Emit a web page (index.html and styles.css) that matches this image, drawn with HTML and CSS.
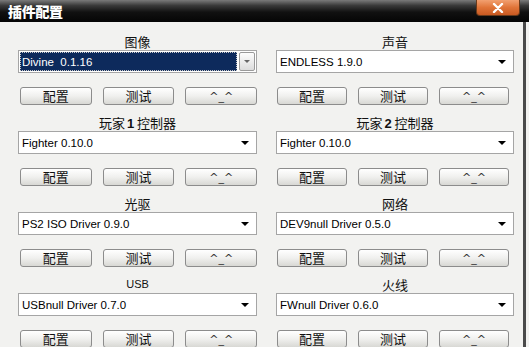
FILE: index.html
```html
<!DOCTYPE html>
<html>
<head>
<meta charset="utf-8">
<link rel="stylesheet" href="styles.css">
</head>
<body>
<div class="window">
  <div class="titlebar">
    <span class="title">插件配置</span>
    <span class="close">
      <svg width="14" height="10" viewBox="0 0 14 10"><path d="M3 1 L11 9 M11 1 L3 9" stroke="#fff" stroke-width="2.4" stroke-linecap="round"/></svg>
    </span>
  </div>
  <div class="content">
    <div class="col left">
      <div class="section">
        <div class="label">图像</div>
        <div class="combo focused"><span class="value"><span class="sel">Divine&nbsp; 0.1.16</span></span><span class="dropbtn"><i class="arrow gray"></i></span></div>
        <div class="buttons"><span class="btn cjk">配置</span><span class="btn cjk">测试</span><span class="btn face">^_^</span></div>
      </div>
      <div class="section">
        <div class="label">玩家<b>1</b> 控制器</div>
        <div class="combo"><span class="value">Fighter 0.10.0</span><i class="arrow"></i></div>
        <div class="buttons"><span class="btn cjk">配置</span><span class="btn cjk">测试</span><span class="btn face">^_^</span></div>
      </div>
      <div class="section">
        <div class="label">光驱</div>
        <div class="combo"><span class="value">PS2 ISO Driver 0.9.0</span><i class="arrow"></i></div>
        <div class="buttons"><span class="btn cjk">配置</span><span class="btn cjk">测试</span><span class="btn face">^_^</span></div>
      </div>
      <div class="section">
        <div class="label latin">USB</div>
        <div class="combo"><span class="value">USBnull Driver 0.7.0</span><i class="arrow"></i></div>
        <div class="buttons"><span class="btn cjk">配置</span><span class="btn cjk">测试</span><span class="btn face">^_^</span></div>
      </div>
    </div>
    <div class="col right">
      <div class="section">
        <div class="label">声音</div>
        <div class="combo"><span class="value">ENDLESS 1.9.0</span><i class="arrow"></i></div>
        <div class="buttons"><span class="btn cjk">配置</span><span class="btn cjk">测试</span><span class="btn face">^_^</span></div>
      </div>
      <div class="section">
        <div class="label">玩家<b>2</b> 控制器</div>
        <div class="combo"><span class="value">Fighter 0.10.0</span><i class="arrow"></i></div>
        <div class="buttons"><span class="btn cjk">配置</span><span class="btn cjk">测试</span><span class="btn face">^_^</span></div>
      </div>
      <div class="section">
        <div class="label">网络</div>
        <div class="combo"><span class="value">DEV9null Driver 0.5.0</span><i class="arrow"></i></div>
        <div class="buttons"><span class="btn cjk">配置</span><span class="btn cjk">测试</span><span class="btn face">^_^</span></div>
      </div>
      <div class="section">
        <div class="label">火线</div>
        <div class="combo"><span class="value">FWnull Driver 0.6.0</span><i class="arrow"></i></div>
        <div class="buttons"><span class="btn cjk">配置</span><span class="btn cjk">测试</span><span class="btn face">^_^</span></div>
      </div>
    </div>
  </div>
</div>
</body>
</html>
```
FILE: styles.css
```css
html, body {
  margin: 0;
  padding: 0;
  background: #f2f2f0;
  overflow: hidden;
}
.window {
  width: 529px;
  height: 347px;
  position: relative;
  overflow: hidden;
  background: #f2f2f0;
}
.window::after {
  content: "";
  position: absolute;
  top: 22px;
  bottom: 0;
  left: 523px;
  width: 3px;
  background: #4a4a4a;
}
.titlebar {
  height: 22px;
  background: linear-gradient(#7a7a7a 0%, #3a3a3a 25%, #111 55%, #050505 100%);
  display: flex;
  align-items: center;
  padding-left: 8px;
  position: relative;
}
.title {
  color: #fff;
  font-family: "Noto Sans CJK SC", sans-serif;
  font-weight: 900;
  font-size: 14px;
  line-height: 22px;
  letter-spacing: -0.3px;
}
.close {
  position: absolute;
  left: 476px;
  top: 0;
  width: 44px;
  height: 16px;
  background: linear-gradient(#f2a070, #e07438 50%, #c95a22);
  border: 1px solid #6a3a1a;
  border-top: none;
  border-radius: 0 0 4px 4px;
  display: flex;
  align-items: center;
  justify-content: center;
  box-sizing: border-box;
}
.content {
  display: grid;
  grid-template-columns: 239px 238px;
  column-gap: 19px;
  padding: 11px 0 0 18px;
}
.section {
  display: flex;
  flex-direction: column;
  padding-bottom: 9px;
}
.label {
  height: 17px;
  line-height: 17px;
  text-align: center;
  font-family: "Noto Sans CJK SC", sans-serif;
  font-size: 13px;
  color: #111;
}
.label b {
  font-family: "Liberation Sans", sans-serif;
  font-weight: 700;
  font-size: 13px;
  margin-left: 2px;
}
.label.latin {
  font-family: "Liberation Sans", sans-serif;
  font-size: 11px;
}
.combo {
  height: 23px;
  box-sizing: border-box;
  border: 1px solid #a5a5a5;
  background: #fff;
  display: flex;
  align-items: center;
  position: relative;
  font-family: "Liberation Sans", sans-serif;
  font-size: 11.5px;
  color: #000;
}
.combo .value {
  flex: 1;
  padding-left: 3px;
  white-space: nowrap;
}
.arrow {
  display: block;
  width: 0;
  height: 0;
  border-left: 4px solid transparent;
  border-right: 4px solid transparent;
  border-top: 4px solid #000;
  margin-right: 7px;
}
.arrow.gray {
  border-top-color: #666;
  margin: 0;
  border-left-width: 3px;
  border-right-width: 3px;
  border-top-width: 3px;
}
.combo.focused {
  padding: 1px;
}
.combo.focused .value {
  align-self: stretch;
  padding: 0;
  display: flex;
}
.combo.focused .sel {
  flex: 1;
  background: #0d2a5c;
  color: #fff;
  outline: 1px dotted #c8c8c8;
  outline-offset: -1px;
  display: flex;
  align-items: center;
  padding-left: 2px;
  margin-right: 2px;
}
.dropbtn {
  width: 16px;
  align-self: stretch;
  box-sizing: border-box;
  border: 1px solid #9a9a9a;
  border-radius: 2px;
  background: linear-gradient(#fdfdfd, #dcdcdc);
  display: flex;
  align-items: center;
  justify-content: center;
}
.buttons {
  display: grid;
  grid-template-columns: repeat(3, 1fr);
  column-gap: 11px;
  margin-top: 14px;
  padding-left: 2px;
}
.right .buttons {
  padding-left: 1px;
  padding-right: 5px;
}
.btn {
  height: 18px;
  box-sizing: border-box;
  border: 1px solid #8c8c8c;
  border-radius: 3px;
  background: linear-gradient(#ffffff, #f0f0ee 50%, #d8d8d4);
  display: flex;
  align-items: center;
  justify-content: center;
  color: #111;
}
.btn.cjk {
  font-family: "Noto Sans CJK SC", sans-serif;
  font-size: 13px;
  line-height: 16px;
}
.btn.face {
  font-family: "DejaVu Sans", sans-serif;
  font-size: 11px;
  line-height: 16px;
  padding-top: 2px;
  color: #333;
}
```
